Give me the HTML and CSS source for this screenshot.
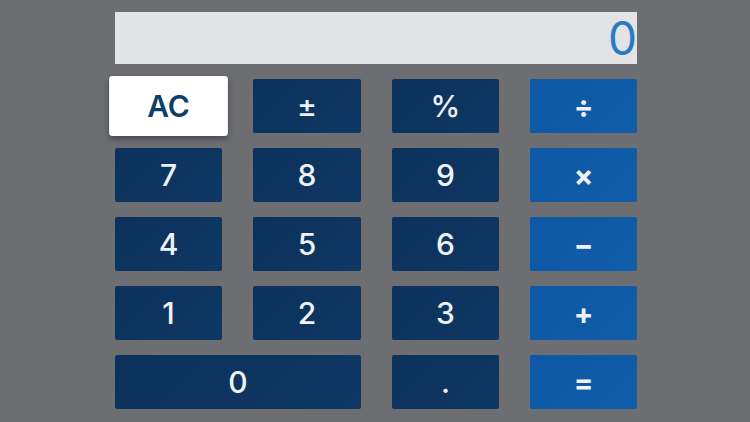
FILE: index.html
```html
<!DOCTYPE html>
<html>
<head>
<meta charset="utf-8">
<link rel="stylesheet" href="styles.css">
</head>
<body>
<div class="calc">
  <div class="display">0</div>
  <div class="key clear">AC</div>
  <div class="key num">±</div>
  <div class="key num">%</div>
  <div class="key op">÷</div>
  <div class="key num">7</div>
  <div class="key num">8</div>
  <div class="key num">9</div>
  <div class="key op">×</div>
  <div class="key num">4</div>
  <div class="key num">5</div>
  <div class="key num">6</div>
  <div class="key op">−</div>
  <div class="key num">1</div>
  <div class="key num">2</div>
  <div class="key num">3</div>
  <div class="key op">+</div>
  <div class="key num zero">0</div>
  <div class="key num">.</div>
  <div class="key op">=</div>
</div>
</body>
</html>
```

FILE: styles.css
```css
html, body {
  margin: 0;
  padding: 0;
  background: #6d6e72;
  width: 750px;
  height: 422px;
  overflow: hidden;
  font-family: Inter, "Liberation Sans", sans-serif;
}
.calc {
  display: grid;
  grid-template-columns: 107px 108px 107px 107px;
  grid-template-rows: 52px repeat(5, 54px);
  column-gap: 31px;
  row-gap: 15px;
  padding: 12px 0 0 115px;
}
.display {
  grid-column: 1 / span 4;
  background: #e2e3e5;
  color: #2b7bc3;
  font-size: 46px;
  line-height: 52px;
  text-align: right;
  font-weight: 400;
}
.key {
  display: flex;
  align-items: center;
  justify-content: center;
  border-radius: 2px;
  font-size: 30px;
  font-weight: 500;
  color: #eef1f5;
}
.num {
  background: linear-gradient(135deg, #0c325c 0%, #0e3763 100%);
}
.op {
  background: linear-gradient(135deg, #0e58a5 0%, #105da9 100%);
  font-size: 29px;
  font-weight: 700;
}
.zero {
  grid-column: 1 / span 2;
}
.clear {
  background: #ffffff;
  color: #0d3f69;
  font-weight: 600;
  font-size: 27px;
  border-radius: 3px;
  transform: scale(1.11);
  box-shadow: 0 2px 6px rgba(0, 0, 0, 0.35);
}
```
